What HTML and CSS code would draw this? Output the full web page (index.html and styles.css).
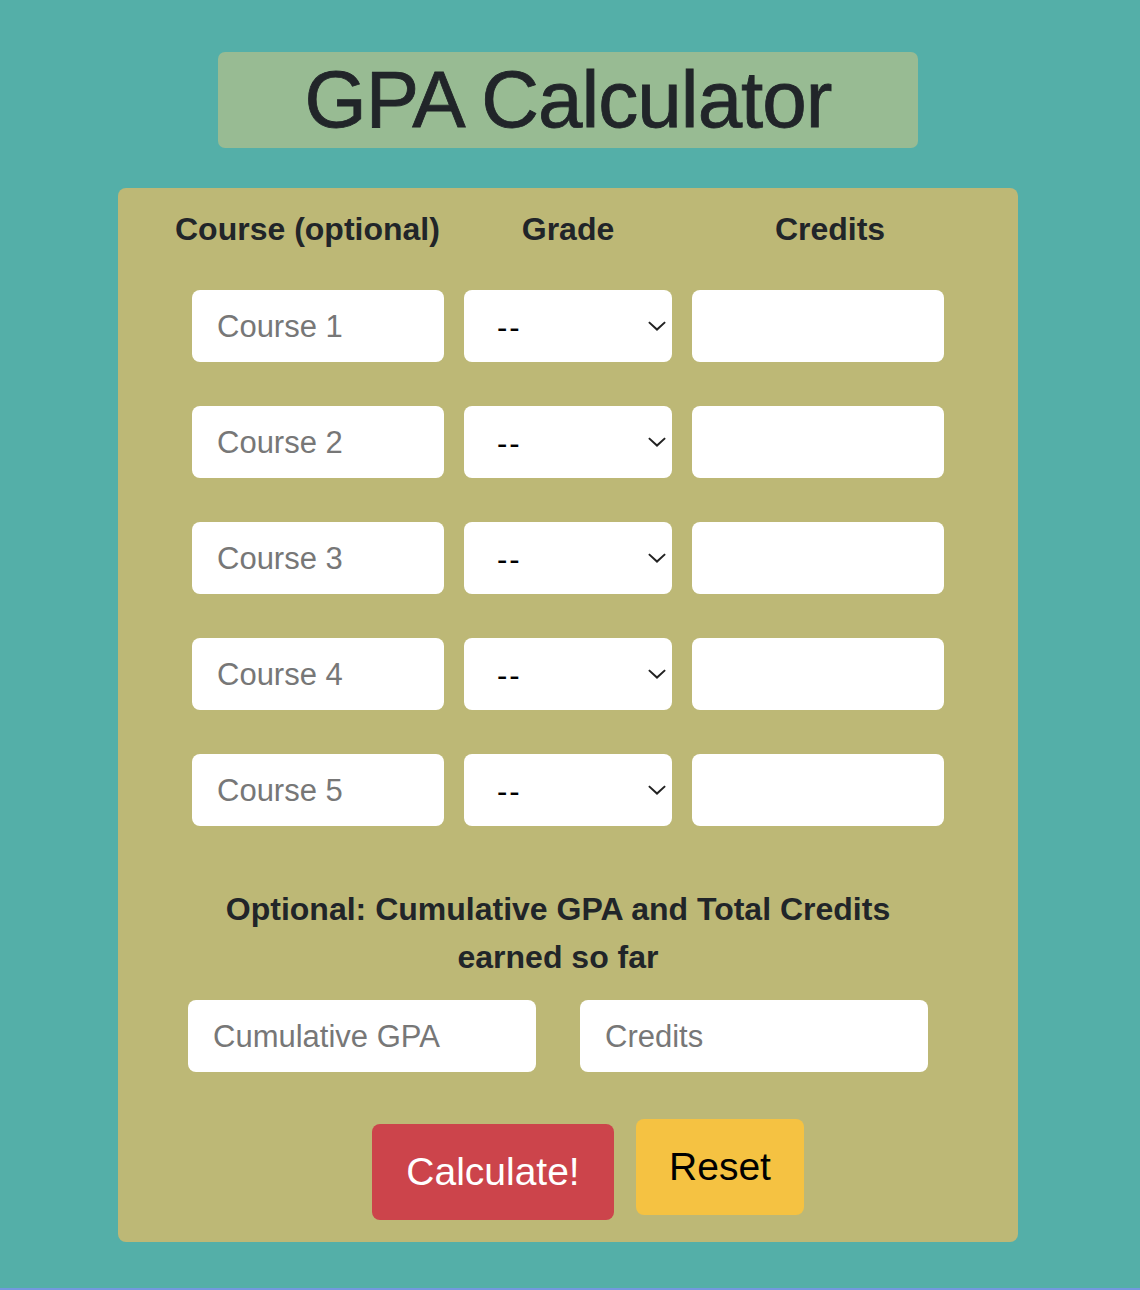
FILE: index.html
```html
<!DOCTYPE html>
<html lang="en">
<head>
<meta charset="utf-8">
<title>GPA Calculator</title>
<link rel="stylesheet" href="styles.css">
</head>
<body>
<main class="page">
  <h1 class="title">GPA Calculator</h1>
  <section class="card">
    <div class="heads">
      <div class="head">Course (optional)</div>
      <div class="head">Grade</div>
      <div class="head">Credits</div>
    </div>
    <div class="rows">
      <div class="row">
        <input class="field" type="text" placeholder="Course 1">
        <div class="sel-wrap"><select class="sel"><option>--</option></select><svg class="chev" viewBox="0 0 20 11"><path d="M1 1.2 L10 9.5 L19 1.2" fill="none" stroke="#222" stroke-width="2.2"/></svg></div>
        <input class="field" type="text">
      </div>
      <div class="row">
        <input class="field" type="text" placeholder="Course 2">
        <div class="sel-wrap"><select class="sel"><option>--</option></select><svg class="chev" viewBox="0 0 20 11"><path d="M1 1.2 L10 9.5 L19 1.2" fill="none" stroke="#222" stroke-width="2.2"/></svg></div>
        <input class="field" type="text">
      </div>
      <div class="row">
        <input class="field" type="text" placeholder="Course 3">
        <div class="sel-wrap"><select class="sel"><option>--</option></select><svg class="chev" viewBox="0 0 20 11"><path d="M1 1.2 L10 9.5 L19 1.2" fill="none" stroke="#222" stroke-width="2.2"/></svg></div>
        <input class="field" type="text">
      </div>
      <div class="row">
        <input class="field" type="text" placeholder="Course 4">
        <div class="sel-wrap"><select class="sel"><option>--</option></select><svg class="chev" viewBox="0 0 20 11"><path d="M1 1.2 L10 9.5 L19 1.2" fill="none" stroke="#222" stroke-width="2.2"/></svg></div>
        <input class="field" type="text">
      </div>
      <div class="row">
        <input class="field" type="text" placeholder="Course 5">
        <div class="sel-wrap"><select class="sel"><option>--</option></select><svg class="chev" viewBox="0 0 20 11"><path d="M1 1.2 L10 9.5 L19 1.2" fill="none" stroke="#222" stroke-width="2.2"/></svg></div>
        <input class="field" type="text">
      </div>
    </div>
    <div class="cumul">
      <p class="note">Optional: Cumulative GPA and Total Credits earned so far</p>
      <div class="cumul-row">
        <input class="field" type="text" placeholder="Cumulative GPA">
        <input class="field" type="text" placeholder="Credits">
      </div>
    </div>
    <div class="actions">
      <button class="btn btn-calc" type="button">Calculate!</button>
      <button class="btn btn-reset" type="button">Reset</button>
    </div>
  </section>
</main>
</body>
</html>
```
FILE: styles.css
```css
html {
  background: #7398df;
}
body {
  margin: 0;
  height: 1288px;
  background: #54afa8;
  font-family: "Liberation Sans", Arial, sans-serif;
  color: #212529;
  overflow: hidden;
}
.page {
  width: 900px;
  margin-left: 118px;
  padding-top: 52px;
}
.title {
  width: 700px;
  height: 96px;
  margin: 0 0 40px 100px;
  background: #98bb93;
  border-radius: 7px;
  font-size: 80px;
  font-weight: 400;
  letter-spacing: -1px;
  line-height: 96px;
  text-align: center;
  -webkit-text-stroke: 0.8px #212529;
}
.card {
  background: #bdb876;
  border-radius: 8px;
  padding: 21px 0 22px;
  height: 1054px;
  box-sizing: border-box;
}
.heads {
  display: grid;
  grid-template-columns: repeat(3, 262px);
  width: 786px;
  margin: 0 auto;
}
.head {
  font-size: 32px;
  font-weight: 700;
  line-height: 40px;
  text-align: center;
  white-space: nowrap;
}
.rows {
  display: flex;
  flex-direction: column;
  gap: 44px;
  margin-top: 41px;
  padding-left: 74px;
}
.row {
  display: grid;
  grid-template-columns: 252px 208px 252px;
  gap: 20px;
}
.field {
  height: 72px;
  box-sizing: border-box;
  border: none;
  border-radius: 8px;
  background: #fff;
  padding: 2px 25px 0;
  font-family: "Liberation Sans", Arial, sans-serif;
  font-size: 31px;
  color: #212529;
  outline: none;
}
.field::placeholder {
  color: #777;
}
.sel-wrap {
  position: relative;
  height: 72px;
}
.sel {
  -webkit-appearance: none;
  appearance: none;
  width: 100%;
  height: 72px;
  border: none;
  border-radius: 8px;
  background: #fff;
  padding: 2px 0 0 33px;
  font-family: "Liberation Sans", Arial, sans-serif;
  font-size: 31px;
  letter-spacing: 2px;
  color: #000;
  outline: none;
}
.chev {
  position: absolute;
  right: 6px;
  top: 31px;
  width: 18px;
  height: 10px;
  pointer-events: none;
}
.cumul {
  width: 740px;
  margin: 59px 0 0 70px;
}
.note {
  margin: 0;
  font-size: 32px;
  font-weight: 700;
  line-height: 48px;
  text-align: center;
  padding: 0 20px;
}
.cumul-row {
  display: flex;
  gap: 44px;
  margin-top: 19px;
}
.cumul-row .field {
  width: 348px;
  padding: 2px 25px 0;
}
.actions {
  display: flex;
  align-items: flex-start;
  gap: 22px;
  margin: 47px 0 0 254px;
}
.btn {
  height: 96px;
  border: none;
  border-radius: 8px;
  font-family: "Liberation Sans", Arial, sans-serif;
  font-size: 39px;
  padding: 0;
}
.btn-calc {
  width: 242px;
  margin-top: 5px;
  background: #cc444b;
  color: #fff;
}
.btn-reset {
  width: 168px;
  background: #f5c242;
  color: #000;
}
```
